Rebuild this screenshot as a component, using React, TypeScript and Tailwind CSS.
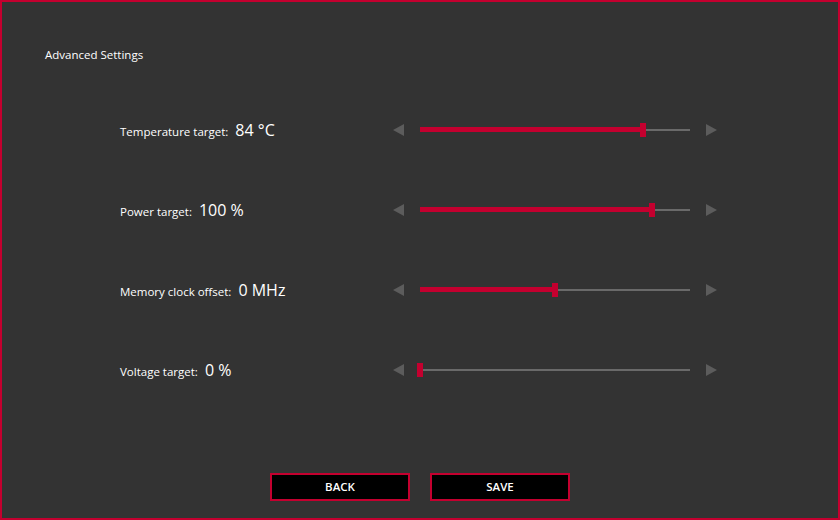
const rows = [
  { label: "Temperature target:", value: "84 °C", fill: 223 },
  { label: "Power target:", value: "100 %", fill: 232 },
  { label: "Memory clock offset:", value: "0 MHz", fill: 135 },
  { label: "Voltage target:", value: "0 %", fill: 0 },
];

function Arrow({ dir }: { dir: "left" | "right" }) {
  return (
    <svg width="11" height="12" viewBox="0 0 11 12" className="shrink-0">
      {dir === "left" ? (
        <polygon points="11,0 11,12 0,6" fill="#5c5c5c" />
      ) : (
        <polygon points="0,0 0,12 11,6" fill="#5c5c5c" />
      )}
    </svg>
  );
}

function Slider({ fill }: { fill: number }) {
  return (
    <div className="flex items-center w-[324px]">
      <Arrow dir="left" />
      <div className="relative ml-[16px] mr-[16px] h-[16px] w-[270px]">
        <div className="absolute left-0 right-0 top-[7px] h-[2px] bg-[#6a6a6a]" />
        <div
          className="absolute left-0 top-[5px] h-[5px] bg-[#c4002f]"
          style={{ width: fill }}
        />
        <div
          className="absolute top-[1px] h-[14px] w-[6px] bg-[#c4002f]"
          style={{ left: fill - 3 }}
        />
      </div>
      <Arrow dir="right" />
    </div>
  );
}

export default function App() {
  return (
    <div
      className="w-[840px] h-[520px] bg-[#333333] border-2 border-[#c4002f] flex flex-col text-white"
      style={{ fontFamily: '"Open Sans", "Noto Sans", sans-serif' }}
    >
      <div className="pl-[43px] pt-[45px] text-[11.5px] leading-[16px] h-[88px]">Advanced Settings</div>
      {rows.map((r) => (
        <div key={r.label} className="flex items-center h-[80px] pl-[118px] pr-[121px]">
          <div className="flex-1 flex items-baseline gap-[7px] -mt-[1px]">
            <span className="text-[11.5px]">{r.label}</span>
            <span className="text-[16px]">{r.value}</span>
          </div>
          <Slider fill={r.fill} />
        </div>
      ))}
      <div className="flex justify-center gap-[20px] mt-auto mb-[17px]">
        <button className="w-[140px] h-[28px] bg-black border-2 border-[#c4002f] text-[11.5px] font-semibold">
          BACK
        </button>
        <button className="w-[140px] h-[28px] bg-black border-2 border-[#c4002f] text-[11.5px] font-semibold">
          SAVE
        </button>
      </div>
    </div>
  );
}
